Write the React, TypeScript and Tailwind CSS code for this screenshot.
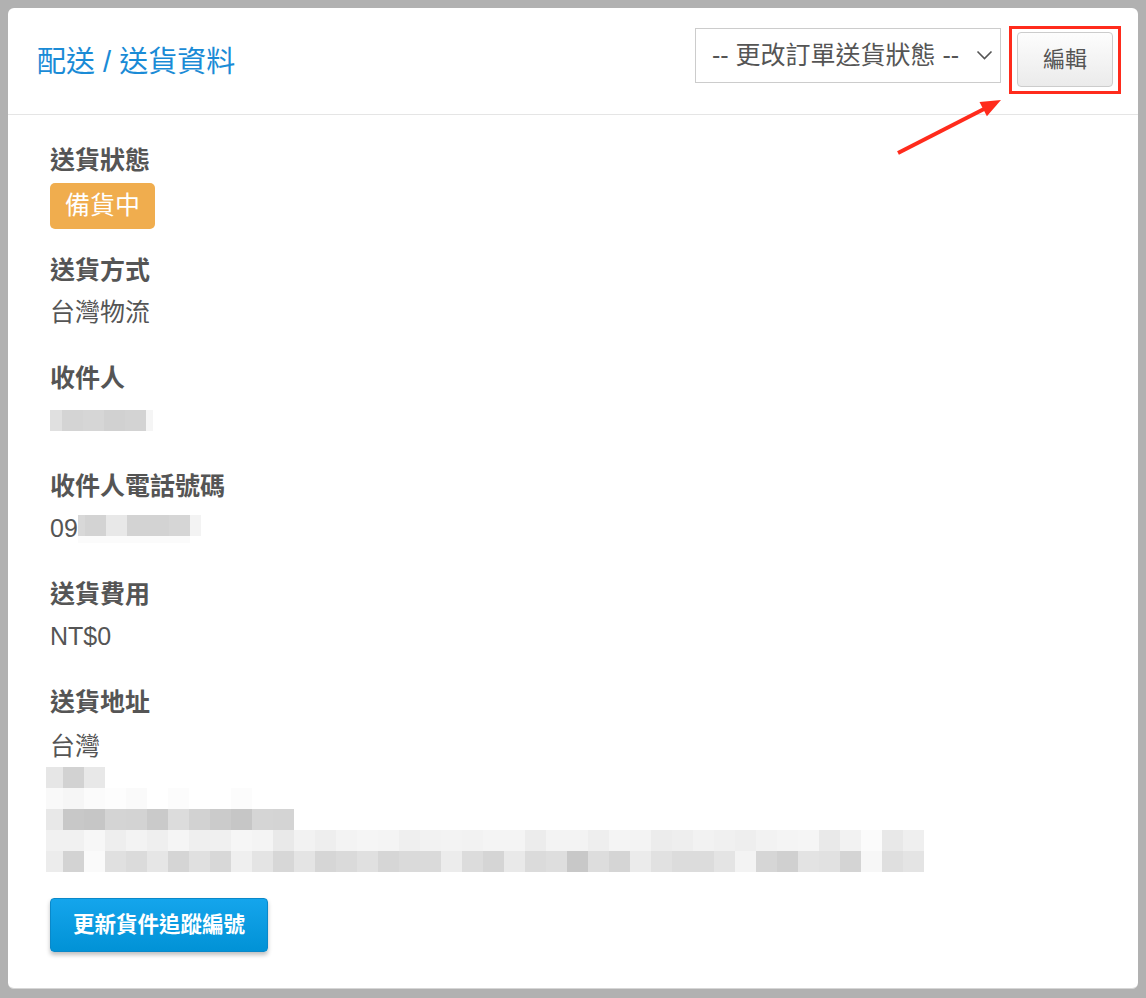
const FONT = "font-['Liberation_Sans','Noto_Sans_CJK_TC',sans-serif]";

type Cell = [number, string];

// 打碼區塊：[寬度, 顏色]
const nameCells: Cell[] = [
  [12, "#e0e0e0"], [21, "#d4d4d4"], [21, "#d6d6d6"], [21, "#d1d1d1"], [21, "#d3d3d3"], [7, "#f5f5f5"],
];

const phoneCells: Cell[] = [
  [7, "#d8d8d8"], [21, "#d3d3d3"], [21, "#e8e8e8"], [21, "#d3d3d3"], [21, "#d3d3d3"], [21, "#d6d6d6"], [11, "#f3f3f3"],
];

const hex = (v: string) => `#${v}${v}${v}`;
const row = (first: string, rest: string[]): Cell[] => [[17, hex(first)], ...rest.map((c) => [21, hex(c)] as Cell)];

const addressRows: Cell[][] = [
  row("e6", ["d2", "e8"]),
  row("f9", ["f6", "fb", "fd", "fa", "ff", "fc", "ff", "ff", "fc"]),
  row("e8", ["c8", "c6", "d4", "d3", "ca", "dc", "d2", "cb", "c6", "d5", "d4"]),
  row("f1", [
    "f1", "f7", "ee", "f3", "ef", "f5", "ef", "f0", "f6", "f4", "e9", "f2", "ee", "f3", "f5", "f4", "ef", "f2", "f3",
    "f2", "f4", "f4", "ec", "f3", "f3", "ee", "f4", "f3", "ec", "ee", "f2", "f0", "ee", "f2", "f4", "f5", "e9",
    "f2", "fb", "e8", "ef",
  ]),
  row("ec", [
    "d3", "fa", "e0", "db", "e6", "d5", "e0", "d8", "ef", "e4", "d7", "e4", "d6", "da", "e0", "d6", "da", "da", "ec",
    "dc", "d5", "e9", "db", "de", "c8", "dd", "d5", "eb", "e1", "dc", "dc", "e4", "f3", "d6", "d0", "e3", "e1", "d4",
    "f7", "df", "e4",
  ]),
];

function Mosaic({ cells }: { cells: Cell[] }) {
  return (
    <div className="flex h-[21px]">
      {cells.map(([w, c], i) => (
        <div key={i} className="h-full" style={{ width: w, backgroundColor: c }} />
      ))}
    </div>
  );
}

function Label({ children }: { children: React.ReactNode }) {
  return <div className="h-9 text-[25px] leading-9 font-bold text-[#555555]">{children}</div>;
}

function Value({ children }: { children: React.ReactNode }) {
  return <div className="mt-[6px] h-9 text-[25px] leading-9 text-[#555555]">{children}</div>;
}

export default function App() {
  return (
    <div className={`relative min-h-screen bg-[#b1b1b1] px-[8px] pt-[8px] pb-[10px] ${FONT}`}>
      <div className="rounded-[6px] border-b border-[#d6d6d6] bg-white">
        <div className="flex h-[107px] justify-between border-b border-[#e5e5e5] pl-[29px] pr-[25px]">
          <h2 className="self-center pt-[2px] text-[29px] leading-10 font-normal text-[#1a8bd6]">配送 / 送貨資料</h2>
          <div className="flex items-start gap-[16px]">
            <div className="mt-[20px] flex h-[55px] w-[306px] items-center justify-between border border-[#cccccc] bg-white pl-[16px] pr-[7px] text-[25px] text-[#555555]">
              <span>-- 更改訂單送貨狀態 --</span>
              <svg width="17" height="11" viewBox="0 0 17 11" fill="none">
                <polyline points="1.5,1.5 8.5,8.5 15.5,1.5" stroke="#555555" strokeWidth="1.6" />
              </svg>
            </div>
            <div className="relative mt-[24px]">
              <button className="flex h-[55px] w-[96px] items-center justify-center rounded-[4px] border border-[#cccccc] bg-gradient-to-b from-[#fdfdfd] to-[#ebebeb] text-[22px] text-[#555555]">
                編輯
              </button>
              <div className="pointer-events-none absolute -top-[6px] -right-[8px] -bottom-[7px] -left-[8px] border-[3px] border-[#ff2b1c]" />
            </div>
          </div>
        </div>

        <div className="pt-[27px] pb-[36px] pl-[42px]">
          <Label>送貨狀態</Label>
          <div className="mt-[5px] mb-[23px] inline-flex h-[46px] items-center rounded-[5px] bg-[#f0ad4e] px-[15px] text-[25px] text-white">
            備貨中
          </div>

          <div className="mb-[30px]">
            <Label>送貨方式</Label>
            <Value>台灣物流</Value>
          </div>

          <div className="mb-[30px]">
            <Label>收件人</Label>
            <div className="mt-[6px] flex h-9 items-center">
              <Mosaic cells={nameCells} />
            </div>
          </div>

          <div className="mb-[30px]">
            <Label>收件人電話號碼</Label>
            <div className="mt-[6px] flex h-9 text-[25px] leading-9 text-[#555555]">
              <span>09</span>
              <div className="mt-[5px]">
                <Mosaic cells={phoneCells} />
                <div className="h-[7px] w-[112px] bg-[#fbfbfb]" />
              </div>
            </div>
          </div>

          <div className="mb-[30px]">
            <Label>送貨費用</Label>
            <Value>NT$0</Value>
          </div>

          <div>
            <Label>送貨地址</Label>
            <div className="mt-[8px] h-9 text-[25px] leading-9 text-[#555555]">台灣</div>
            <div className="mt-[3px] -ml-[4px]">
              {addressRows.map((cells, i) => (
                <Mosaic key={i} cells={cells} />
              ))}
            </div>
          </div>

          <button className="mt-[26px] h-[54px] w-[218px] rounded-[4px] border border-[#0a88c9] bg-gradient-to-b from-[#14a5ec] to-[#0192d6] text-[21.5px] font-bold text-white shadow-[0_3px_4px_rgba(0,0,0,0.25)]">
            更新貨件追蹤編號
          </button>
        </div>
      </div>

      <svg className="pointer-events-none absolute top-[90px] left-[880px]" width="130" height="70" viewBox="0 0 130 70">
        <line x1="18" y1="63" x2="105" y2="18.5" stroke="#ff2b1c" strokeWidth="4" />
        <polygon points="121,10 99.5,12.1 106.9,26.3" fill="#ff2b1c" />
      </svg>
    </div>
  );
}
